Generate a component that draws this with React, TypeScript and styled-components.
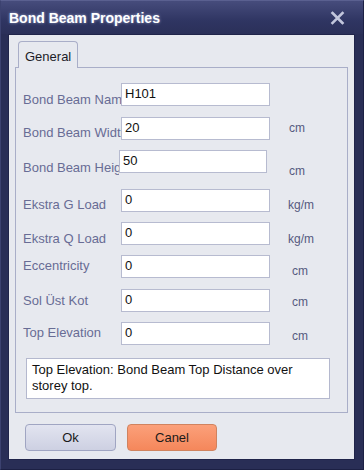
import React from 'react';
import styled, { createGlobalStyle } from 'styled-components';

const GlobalStyle = createGlobalStyle`
  html, body {
    margin: 0;
    padding: 0;
    background: #2a2f57;
  }
  body {
    font-family: "Liberation Sans", Arial, sans-serif;
  }
`;

const Window = styled.div`
  width: 364px;
  height: 470px;
  box-sizing: border-box;
  display: flex;
  flex-direction: column;
  background: #292e56;
  border-top: 1px solid #5a6090;
  border-left: 1px solid #3c4270;
  border-right: 1px solid #1c2044;
  border-bottom: 1px solid #1c2044;
`;

const TitleBar = styled.div`
  height: 33px;
  display: flex;
  align-items: center;
  justify-content: space-between;
  padding: 0 18px 0 8px;
  background: linear-gradient(#464c7c, #2f3562 60%, #2b3059);
`;

const Title = styled.span`
  color: #ffffff;
  font-weight: bold;
  font-size: 14px;
  text-shadow: 0 0 3px rgba(200, 215, 255, 0.7);
`;

const CloseButton = styled.div`
  width: 16px;
  height: 16px;
  display: flex;
  align-items: center;
  justify-content: center;
`;

const Body = styled.div`
  flex: 1;
  margin: 0 8px 9px 7px;
  background: #e7e9ef;
  border: 1px solid #20244a;
  display: flex;
  flex-direction: column;
  padding: 6px 6px 0 6px;
`;

const TabStrip = styled.div`
  display: flex;
  padding-left: 3px;
  height: 26px;
`;

const Tab = styled.div<{ active?: boolean }>`
  width: 60px;
  box-sizing: border-box;
  height: 27px;
  border: 1px solid #a9aec8;
  border-bottom: none;
  border-radius: 4px 4px 0 0;
  background: #e7e9ef;
  font-size: 13px;
  color: #1c1c28;
  padding: 7px 0 0 6px;
  position: relative;
  z-index: 1;
`;

const Panel = styled.div`
  height: 346px;
  box-sizing: border-box;
  border: 1px solid #a9aec8;
  background: #e7e9ef;
  display: flex;
  flex-direction: column;
  padding: 15px 0 0 7px;
`;

const Row = styled.div<{ gap: number }>`
  display: flex;
  align-items: flex-start;
  height: 23px;
  margin-top: ${p => p.gap}px;
`;

const Label = styled.div<{ dy: number; w: number }>`
  width: ${p => p.w}px;
  overflow: hidden;
  white-space: nowrap;
  font-size: 13px;
  line-height: 16px;
  color: #686c95;
  padding-top: ${p => 3 + p.dy}px;
`;

const Field = styled.div<{ w: number }>`
  width: ${p => p.w}px;
  height: 23px;
  box-sizing: border-box;
  background: #ffffff;
  border: 1px solid #b7bbd0;
  font-size: 13px;
  line-height: 20px;
  color: #111111;
  padding-left: 3px;
`;

const Unit = styled.div<{ x: number; dy: number }>`
  margin-left: ${p => p.x}px;
  font-size: 12px;
  line-height: 16px;
  color: #565a80;
  padding-top: ${p => 3 + p.dy}px;
`;

const Note = styled.div`
  margin: 13px 0 0 3px;
  width: 304px;
  height: 41px;
  box-sizing: border-box;
  background: #ffffff;
  border: 1px solid #b4b8ce;
  font-size: 13px;
  line-height: 16px;
  color: #111111;
  padding: 3px 5px;
`;

const ButtonRow = styled.div`
  display: flex;
  gap: 11px;
  padding: 11px 0 0 10px;
`;

const Button = styled.div<{ variant?: 'ok' | 'cancel' }>`
  width: ${p => (p.variant === 'cancel' ? 90 : 91)}px;
  height: 27px;
  box-sizing: border-box;
  border-radius: 4px;
  display: flex;
  align-items: center;
  justify-content: center;
  font-size: 13px;
  color: #1a1a1a;
  background: ${p =>
    p.variant === 'cancel'
      ? 'linear-gradient(#fba07a, #f5875b)'
      : 'linear-gradient(#e2e4f0, #cdd0e2)'};
  border: 1px solid ${p => (p.variant === 'cancel' ? '#d0835f' : '#a0a5c2')};
`;

const fields = [
  { label: 'Bond Beam Name', value: 'H101', unit: '', gap: 0, lw: 98, w: 149, ldy: 6, ux: 0, udy: 0 },
  { label: 'Bond Beam Width', value: '20', unit: 'cm', gap: 11, lw: 98, w: 149, ldy: 5, ux: 19, udy: 0 },
  { label: 'Bond Beam Height', value: '50', unit: 'cm', gap: 10, lw: 96, w: 148, ldy: 7, ux: 22, udy: 10 },
  { label: 'Ekstra G Load', value: '0', unit: 'kg/m', gap: 16, lw: 98, w: 149, ldy: 5, ux: 18, udy: 5 },
  { label: 'Ekstra Q Load', value: '0', unit: 'kg/m', gap: 10, lw: 98, w: 149, ldy: 6, ux: 18, udy: 6 },
  { label: 'Eccentricity', value: '0', unit: 'cm', gap: 10, lw: 98, w: 149, ldy: 0, ux: 22, udy: 5 },
  { label: 'Sol Üst Kot', value: '0', unit: 'cm', gap: 11, lw: 98, w: 149, ldy: 1, ux: 22, udy: 2 },
  { label: 'Top Elevation', value: '0', unit: 'cm', gap: 10, lw: 98, w: 149, ldy: 0, ux: 22, udy: 3 },
];

export default function App() {
  return (
    <>
      <GlobalStyle />
      <Window>
        <TitleBar>
          <Title>Bond Beam Properties</Title>
          <CloseButton>
            <svg width="15" height="14" viewBox="0 0 15 14">
              <path d="M2.5 2 L12.5 12 M12.5 2 L2.5 12" stroke="#c2c6dc" strokeWidth="2.6" strokeLinecap="square" />
            </svg>
          </CloseButton>
        </TitleBar>
        <Body>
          <TabStrip>
            <Tab active>General</Tab>
          </TabStrip>
          <Panel>
            {fields.map(f => (
              <Row key={f.label} gap={f.gap}>
                <Label dy={f.ldy} w={f.lw}>{f.label}</Label>
                <Field w={f.w}>{f.value}</Field>
                {f.unit && <Unit x={f.ux} dy={f.udy}>{f.unit}</Unit>}
              </Row>
            ))}
            <Note>Top Elevation: Bond Beam Top Distance over storey top.</Note>
          </Panel>
          <ButtonRow>
            <Button variant="ok">Ok</Button>
            <Button variant="cancel">Canel</Button>
          </ButtonRow>
        </Body>
      </Window>
    </>
  );
}
